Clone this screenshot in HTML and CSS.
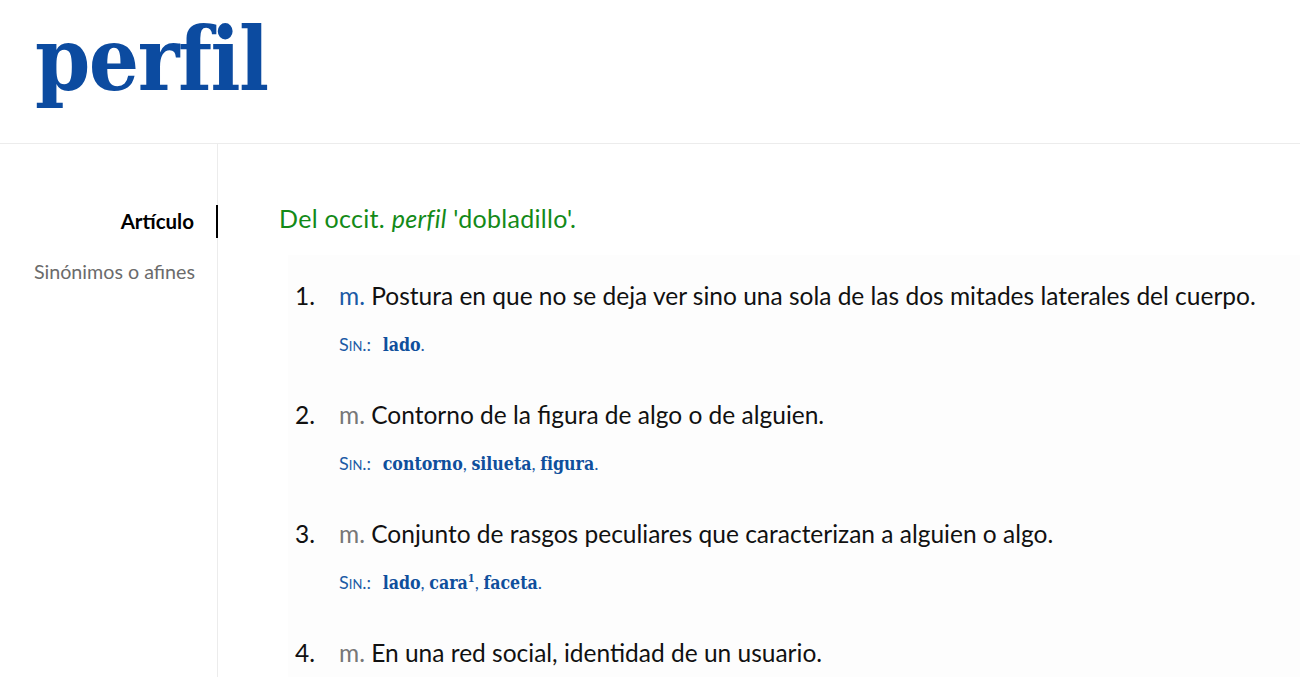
FILE: index.html
```html
<!DOCTYPE html>
<html lang="es">

<head>
    <meta charset="UTF-8">
    <meta name="viewport" content="width=device-width, initial-scale=1.0">
    <title>perfil</title>
    <link rel="stylesheet" href="styles.css">
</head>

<body>
    <header class="entry-header">
        <h1 class="entry-title">perfil</h1>
    </header>

    <div class="entry-body">
        <nav class="side-nav">
            <a href="#articulo" class="side-link active">Artículo</a>
            <a href="#sinonimos" class="side-link">Sinónimos o afines</a>
        </nav>

        <article class="entry-article" id="articulo">
            <p class="etym">Del occit. <em>perfil</em> 'dobladillo'.</p>

            <ol class="defs">
                <li class="def">
                    <span class="num">1.</span>
                    <div class="def-main">
                        <p class="def-text"><abbr class="gram current">m.</abbr> Postura en que no se deja ver sino una sola de las dos mitades laterales del cuerpo.</p>
                        <p class="syn"><span class="syn-label">Sin.:</span> <a href="#" class="syn-word">lado</a>.</p>
                    </div>
                </li>
                <li class="def">
                    <span class="num">2.</span>
                    <div class="def-main">
                        <p class="def-text"><abbr class="gram">m.</abbr> Contorno de la figura de algo o de alguien.</p>
                        <p class="syn"><span class="syn-label">Sin.:</span> <a href="#" class="syn-word">contorno</a>, <a href="#" class="syn-word">silueta</a>, <a href="#" class="syn-word">figura</a>.</p>
                    </div>
                </li>
                <li class="def">
                    <span class="num">3.</span>
                    <div class="def-main">
                        <p class="def-text"><abbr class="gram">m.</abbr> Conjunto de rasgos peculiares que caracterizan a alguien o algo.</p>
                        <p class="syn"><span class="syn-label">Sin.:</span> <a href="#" class="syn-word">lado</a>, <a href="#" class="syn-word">cara<sup>1</sup></a>, <a href="#" class="syn-word">faceta</a>.</p>
                    </div>
                </li>
                <li class="def">
                    <span class="num">4.</span>
                    <div class="def-main">
                        <p class="def-text"><abbr class="gram">m.</abbr> En una red social, identidad de un usuario.</p>
                    </div>
                </li>
            </ol>
        </article>
    </div>
</body>

</html>
```

FILE: styles.css
```css
body {
    margin: 0;
    font-family: Lato, "Open Sans", sans-serif;
    color: #111;
    background: #fff;
}

.entry-header {
    height: 143px;
    border-bottom: 1px solid #ececec;
    padding-left: 35px;
    overflow: hidden;
}

.entry-title {
    margin: 0;
    font-family: "DejaVu Serif Condensed", "DejaVu Serif", serif;
    font-weight: bold;
    font-size: 88px;
    line-height: 118px;
    color: #0c4ba0;
    letter-spacing: -1.5px;
}

.entry-body {
    display: flex;
}

.side-nav {
    width: 217px;
    flex-shrink: 0;
    border-right: 1px solid #ececec;
    display: flex;
    flex-direction: column;
    align-items: stretch;
    padding-top: 61px;
    min-height: 540px;
}

.side-link {
    display: block;
    text-align: right;
    padding-right: 22px;
    text-decoration: none;
    color: #6b6b6b;
    font-size: 19.7px;
    line-height: 33px;
    margin-bottom: 17px;
}

.side-link.active {
    color: #000;
    font-weight: bold;
    font-size: 20.5px;
    border-right: 2px solid #000;
    margin-right: -1px;
}

.entry-article {
    flex-grow: 1;
    padding-left: 61px;
}

.etym {
    margin: 58px 0 0;
    color: #138a18;
    font-size: 25px;
    line-height: 33px;
    letter-spacing: 0.3px;
}

.etym em {
    font-style: italic;
}

.defs {
    list-style: none;
    margin: 20px 0 0 9px;
    padding: 0;
    background: #fdfdfd;
}

.def {
    display: flex;
    padding-top: 26px;
    padding-bottom: 17px;
}

.num {
    width: 44px;
    padding-left: 7px;
    flex-shrink: 0;
    font-size: 24.5px;
    line-height: 30px;
}

.def-text {
    margin: 0;
    font-size: 24.5px;
    line-height: 30px;
}

.gram {
    text-decoration: none;
    color: #777;
}

.gram.current {
    color: #1b5aa5;
}

.syn {
    margin: 21px 0 0;
    font-size: 18px;
    line-height: 24px;
    color: #1b5aa5;
}

.syn-label {
    font-variant: small-caps;
    margin-right: 7px;
}

.syn-word {
    font-family: "DejaVu Serif Condensed", "DejaVu Serif", serif;
    font-weight: bold;
    font-size: 17.6px;
    color: #0f4f9c;
    text-decoration: none;
}

.syn-word sup {
    font-size: 11px;
    line-height: 0;
}
```
